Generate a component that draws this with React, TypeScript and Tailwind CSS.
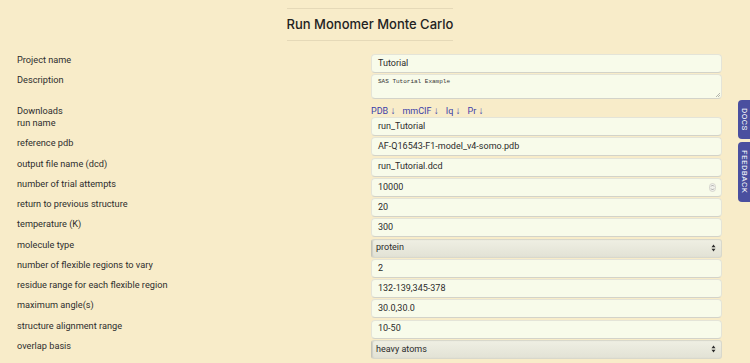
import React from "react";

const labelFont = { fontFamily: "Roboto, 'Liberation Sans', sans-serif" };

function Field({ value }: { value: string }) {
  return (
    <div className="flex h-[19px] w-[351px] items-center rounded-[4px] border border-[#e4e4d8] border-b-[#d3d3c9] bg-[#f8fbea] pl-[6px] text-[9px] text-[#2b2b2b]">
      {value}
    </div>
  );
}

function NumberField({ value }: { value: string }) {
  return (
    <div className="flex h-[19px] w-[351px] items-center justify-between rounded-[4px] border border-[#e4e4d8] border-b-[#d3d3c9] bg-[#f8fbea] pl-[6px] pr-[5px] text-[9px] text-[#2b2b2b]">
      <span>{value}</span>
      <svg width="7" height="9" viewBox="0 0 7 9">
        <rect x="0.5" y="0.5" width="6" height="8" rx="3" fill="#f2f2ec" stroke="#cfcfc8" strokeWidth="0.8" />
        <path d="M2 3.5 L3.5 2 L5 3.5 M2 5.5 L3.5 7 L5 5.5" fill="none" stroke="#8a8a86" strokeWidth="0.7" />
      </svg>
    </div>
  );
}

function SelectField({ value }: { value: string }) {
  return (
    <div className="flex h-[19px] w-[351px] items-center justify-between rounded-[3px] border border-[#d8d8cc] border-l-[#c4c4ba] bg-gradient-to-b from-[#efefe3] to-[#e2e2d5] pl-[4px] pr-[5px] text-[9px] text-[#2b2b2b] shadow-[inset_1px_0_1px_#d0d0c6]">
      <span>{value}</span>
      <svg width="5" height="8" viewBox="0 0 5 8">
        <path d="M2.5 0.5 L4.5 3.2 L0.5 3.2 Z M2.5 7.5 L4.5 4.8 L0.5 4.8 Z" fill="#2b2b2b" />
      </svg>
    </div>
  );
}

function Row({ label, children }: { label: string; children: React.ReactNode }) {
  return (
    <div className="mb-[1.27px] flex items-start">
      <div className="w-[371px] shrink-0 pl-[17px] text-[9.2px] leading-[12px] text-[#2e2e2e]">{label}</div>
      {children}
    </div>
  );
}

export default function App() {
  const rows: [string, React.ReactNode][] = [
    ["run name", <Field value="run_Tutorial" />],
    ["reference pdb", <Field value="AF-Q16543-F1-model_v4-somo.pdb" />],
    ["output file name (dcd)", <Field value="run_Tutorial.dcd" />],
    ["number of trial attempts", <NumberField value="10000" />],
    ["return to previous structure", <Field value="20" />],
    ["temperature (K)", <Field value="300" />],
    ["molecule type", <SelectField value="protein" />],
    ["number of flexible regions to vary", <Field value="2" />],
    ["residue range for each flexible region", <Field value="132-139,345-378" />],
    ["maximum angle(s)", <Field value="30.0,30.0" />],
    ["structure alignment range", <Field value="10-50" />],
    ["overlap basis", <SelectField value="heavy atoms" />],
  ];

  return (
    <div className="relative h-[363px] w-[750px] overflow-hidden bg-[#f8ecc9]" style={labelFont}>
      {/* title */}
      <div className="flex w-[740px] justify-center pt-[8px]">
        <div
          className="flex h-[33px] items-center justify-center whitespace-nowrap border-y border-[#e5d9b8] text-[13px] font-medium text-[#222]"
          style={{ fontFamily: "Inter, 'Noto Sans', sans-serif" }}
        >
          Run Monomer Monte Carlo
        </div>
      </div>

      <div className="mt-[13px]">
        <Row label="Project name">
          <Field value="Tutorial" />
        </Row>
        <Row label="Description">
          <div className="relative h-[25px] w-[351px] rounded-[4px] border border-[#e4e4d8] border-b-[#d3d3c9] bg-[#f8fbea] pl-[6px] pt-[3px] text-[6px] leading-[8px] text-[#333]" style={{ fontFamily: "'Liberation Mono', monospace" }}>
            SAS Tutorial Example
            <svg className="absolute bottom-[1px] right-[1px]" width="5" height="5" viewBox="0 0 5 5">
              <path d="M1 5 L5 1 M3 5 L5 3" stroke="#9a9a94" strokeWidth="0.7" />
            </svg>
          </div>
        </Row>
        <div className="flex h-[16.5px] items-start pt-[4.5px]">
          <div className="w-[371px] shrink-0 pl-[17px] text-[9.2px] leading-[12px] text-[#2e2e2e]">Downloads</div>
          <div className="flex gap-[7px] text-[9px] leading-[12px] text-[#3b3ea8]">
            <span>PDB <span className="text-[10px]">↓</span></span>
            <span>mmCIF <span className="text-[10px]">↓</span></span>
            <span>Iq <span className="text-[10px]">↓</span></span>
            <span>Pr <span className="text-[10px]">↓</span></span>
          </div>
        </div>
        {rows.map(([label, field], i) => (
          <Row key={i} label={label}>
            {field}
          </Row>
        ))}
      </div>

      {/* side tabs */}
      <div className="absolute left-[738px] top-[100px] flex h-[39px] w-[12px] items-center justify-center rounded-l-[4px] bg-[#4a4f9f]">
        <span className="text-[8px] leading-[9px] tracking-[0.5px] text-white" style={{ writingMode: "vertical-rl" }}>
          DOCS
        </span>
      </div>
      <div className="absolute left-[738px] top-[142px] flex h-[60px] w-[12px] items-center justify-center rounded-l-[4px] bg-[#4a4f9f]">
        <span className="text-[8px] leading-[9px] tracking-[0.5px] text-white" style={{ writingMode: "vertical-rl" }}>
          FEEDBACK
        </span>
      </div>
    </div>
  );
}
